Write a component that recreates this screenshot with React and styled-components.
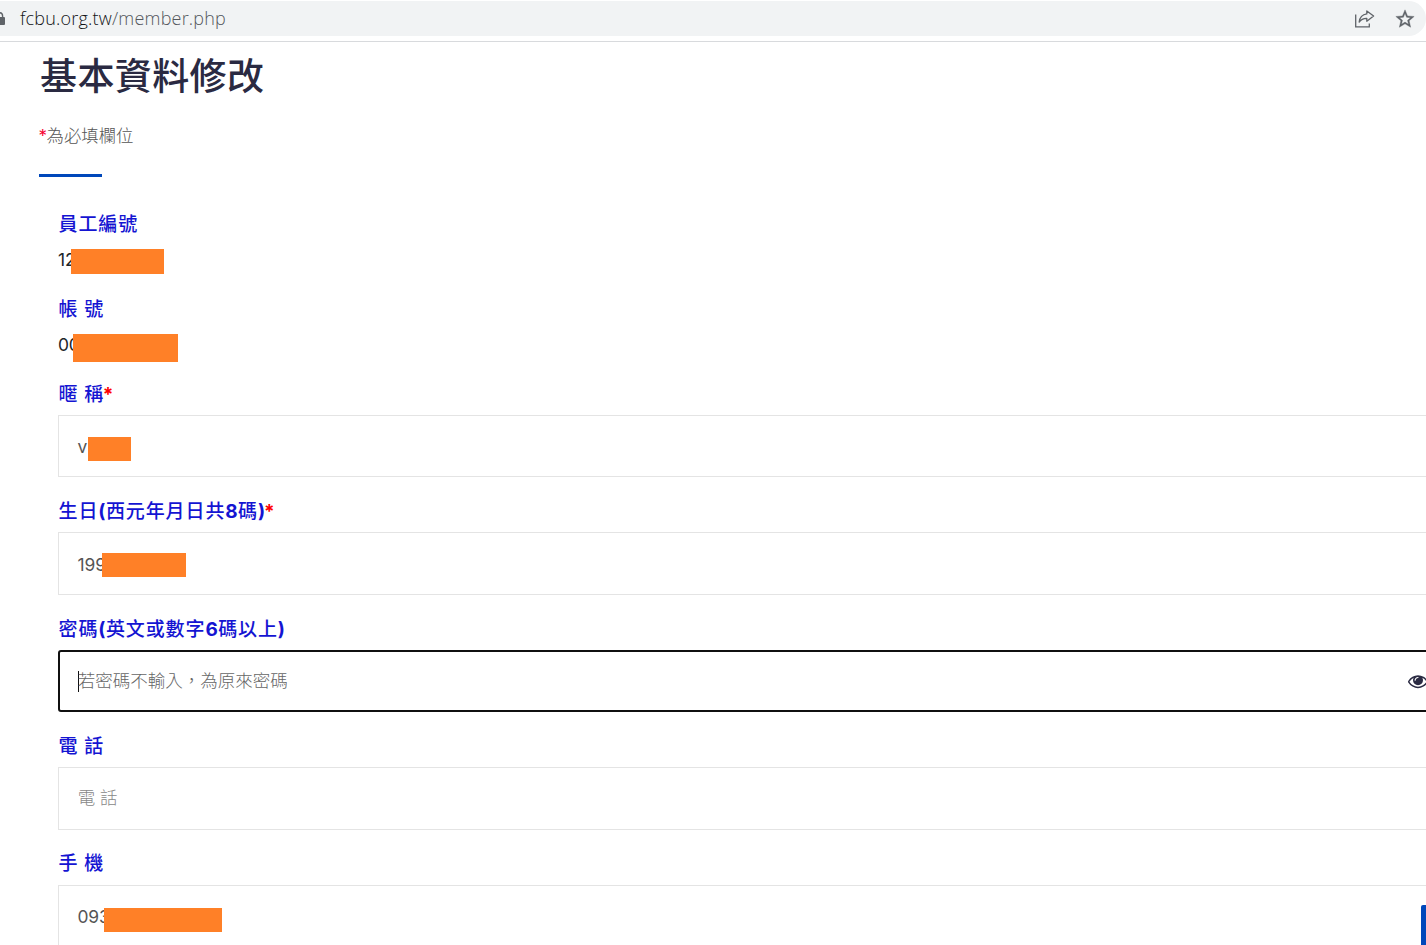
import React from 'react';
import styled, { createGlobalStyle } from 'styled-components';

const GlobalStyle = createGlobalStyle`
  * {
    box-sizing: border-box;
  }

  body {
    margin: 0;
    background: #fff;
    overflow: hidden;
  }
`;

// Fields shown on the member page
const fields = [
  { label: '員工編號', value: '12', plain: true, mask: { left: 13, top: 4, width: 93, height: 25 } },
  { label: '帳 號', value: '00', plain: true, mask: { left: 15, top: 4, width: 105, height: 28 } },
  { label: '暱 稱', required: true, value: 'v', mask: { left: 29, top: 21, width: 43, height: 24 } },
  { label: '生日(西元年月日共8碼)', required: true, value: '199', mask: { left: 43, top: 20, width: 84, height: 24 } },
  { label: '密碼(英文或數字6碼以上)', placeholder: '若密碼不輸入，為原來密碼', focused: true },
  { label: '電 話', placeholder: '電 話' },
  { label: '手 機', value: '093', mask: { left: 45, top: 22, width: 118, height: 24 } },
];

const LockIcon = () => (
  <svg width="5" height="14" viewBox="0 0 5 14">
    <path d="M-5 5H4Q5 5 5 6V12Q5 13 4 13H-5Z" fill="#5f6368" />
    <path d="M-4 5V4A3.2 3.2 0 0 1 2.6 4V5" fill="none" stroke="#5f6368" strokeWidth="1.4" />
  </svg>
);

const ShareIcon = () => (
  <svg width="20" height="20" viewBox="0 0 20 20" fill="none" stroke="#5f6368" strokeWidth="1.3">
    <path d="M0.7 5.5V17.8H14.3V14.5" />
    <path d="M11.8 1.9L18.6 7.1L11.8 12.2V9.3C8.4 9.2 6 10.4 4.2 13.1C4.7 8.7 7.4 5.5 11.8 4.9Z" strokeLinejoin="round" />
  </svg>
);

const StarIcon = () => (
  <svg width="22" height="22" viewBox="0 0 24 24" fill="#5f6368" stroke="#5f6368" strokeWidth="0.4">
    <path d="M22 9.24l-7.19-.62L12 2 9.19 8.63 2 9.24l5.46 4.73L5.82 21 12 17.27 18.18 21l-1.63-7.03L22 9.24zM12 15.4l-3.76 2.27 1-4.28-3.32-2.88 4.38-.38L12 6.1l1.71 4.04 4.38.38-3.32 2.88 1 4.28L12 15.4z" />
  </svg>
);

const EyeIcon = () => (
  <svg width="20" height="20" viewBox="0 0 1792 1792" fill="#2a2a42">
    <path d="M1664 960q-152-236-381-353 61 104 61 225 0 185-131.5 316.5t-316.5 131.5-316.5-131.5-131.5-316.5q0-121 61-225-229 117-381 353 133 205 333.5 326.5t434.5 121.5 434.5-121.5 333.5-326.5zm-720-384q0-20-14-34t-34-14q-125 0-214.5 89.5t-89.5 214.5q0 20 14 34t34 14 34-14 14-34q0-86 61-147t147-61q20 0 34-14t14-34zm848 384q0 34-20 69-140 230-376.5 368.5t-499.5 138.5-499.5-139-376.5-368q-20-35-20-69t20-69q140-229 376.5-368t499.5-139 499.5 139 376.5 368q20 35 20 69z" />
  </svg>
);

// Digits and brackets in a label are heavier than the Chinese text
const LabelText = ({ text }) =>
  text.split(/([()\d]+)/).map((part, index) =>
    /[()\d]/.test(part) ? <LatinPart key={index}>{part}</LatinPart> : part
  );

const App = () => {
  return (
    <Page>
      <GlobalStyle />
      <BrowserBar>
        <AddressBar>
          <LockIcon />
          <Url>
            fcbu.org.tw<UrlPath>/member.php</UrlPath>
          </Url>
          <BarIcons>
            <ShareIcon />
            <StarIcon />
          </BarIcons>
        </AddressBar>
      </BrowserBar>

      <Content>
        <Title>基本資料修改</Title>
        <Note>
          <NoteStar>*</NoteStar>為必填欄位
        </Note>
        <Divider />

        <Form>
          {fields.map((field) => (
            <Field key={field.label} $plain={field.plain}>
              <Label>
                <LabelText text={field.label} />
                {field.required && <Required>*</Required>}
              </Label>
              <Control $plain={field.plain} $focused={field.focused}>
                {field.focused && <Caret />}
                {field.value && <Value $plain={field.plain}>{field.value}</Value>}
                {field.placeholder && (
                  <Placeholder $focused={field.focused}>{field.placeholder}</Placeholder>
                )}
                {field.focused && (
                  <EyeButton>
                    <EyeIcon />
                  </EyeButton>
                )}
                {field.mask && <Mask $box={field.mask} />}
              </Control>
            </Field>
          ))}
        </Form>
      </Content>
      <ScrollTop />
    </Page>
  );
};

const Page = styled.div`
  position: relative;
  width: 1426px;
  height: 945px;
  overflow: hidden;
  background: #fff;
  font-family: 'Inter', 'Noto Sans CJK TC', sans-serif;
`;

const BrowserBar = styled.header`
  height: 42px;
  padding-top: 1px;
  border-bottom: 1px solid #d8dadd;
`;

const AddressBar = styled.div`
  display: flex;
  align-items: center;
  height: 35px;
  padding-right: 10.5px;
  background: #f1f3f4;
  border-radius: 0 18px 18px 0;
`;

const Url = styled.div`
  margin-left: 15px;
  padding-bottom: 2px;
  font-family: 'Open Sans', sans-serif;
  font-size: 18px;
  font-weight: 300;
  line-height: 24px;
  letter-spacing: 0.2px;
  color: #111316;
`;

const UrlPath = styled.span`
  color: #53575c;
`;

const BarIcons = styled.div`
  display: flex;
  align-items: center;
  gap: 18.5px;
  margin-left: auto;
`;

const Content = styled.main`
  padding-left: 39px;
`;

const Title = styled.h1`
  margin: 0;
  padding: 9px 0 0 1px;
  height: 78px;
  font-size: 37px;
  font-weight: 500;
  line-height: 52px;
  letter-spacing: 0.4px;
  color: #2a2a42;
`;

const Note = styled.p`
  margin: 0;
  height: 54px;
  font-size: 17.4px;
  font-weight: 300;
  line-height: 32px;
  color: #555;
`;

const NoteStar = styled.span`
  display: inline-block;
  width: 7.5px;
  font-size: 17px;
  font-weight: 400;
  letter-spacing: -1px;
  line-height: 20px;
  text-indent: -0.5px;
  color: #f5002f;
`;

const Divider = styled.div`
  width: 63px;
  height: 3px;
  background: #0047ba;
`;

const Form = styled.form`
  margin: 34px 0 0 19px;
`;

const Field = styled.div`
  height: ${({ $plain }) => ($plain ? '85px' : '117.4px')};
`;

const Label = styled.div`
  height: 34px;
  padding: 1.9px 0 0 0.5px;
  font-size: 19px;
  font-weight: 500;
  line-height: 24px;
  letter-spacing: 0.9px;
  white-space: pre;
  color: #1414d2;
`;

const LatinPart = styled.span`
  font-weight: 700;
  letter-spacing: 0.4px;
`;

const Required = styled.span`
  margin-left: -1.5px;
  font-weight: 700;
  color: #f00;
`;

const Control = styled.div`
  position: relative;
  display: flex;
  align-items: center;
  width: 1400px;
  height: ${({ $plain }) => ($plain ? '29px' : '62.4px')};
  padding-left: ${({ $plain, $focused }) => ($plain ? '0' : $focused ? '18px' : '19px')};
  border: ${({ $plain, $focused }) =>
    $plain ? 'none' : $focused ? '2px solid #101010' : '1px solid #e4e4e4'};
  border-radius: ${({ $focused }) => ($focused ? '3px' : '0')};
`;

const Value = styled.span`
  margin-left: ${({ $plain }) => ($plain ? '0' : '-0.5px')};
  padding-top: ${({ $plain }) => ($plain ? '0' : '2px')};
  font-size: 17.4px;
  line-height: 28px;
  letter-spacing: -0.1px;
  color: ${({ $plain }) => ($plain ? '#212529' : '#555')};
`;

const Placeholder = styled.span`
  margin-left: -0.3px;
  font-size: 17.5px;
  font-weight: 300;
  line-height: 28px;
  color: ${({ $focused }) => ($focused ? '#666' : '#888')};
`;

const Caret = styled.span`
  width: 1px;
  height: 21px;
  margin-top: 1px;
  margin-right: -1px;
  background: #111;
`;

const EyeButton = styled.span`
  position: absolute;
  left: 1348px;
  top: 19px;
  display: flex;
`;

// Covers private details
const Mask = styled.span`
  position: absolute;
  left: ${({ $box }) => $box.left}px;
  top: ${({ $box }) => $box.top}px;
  width: ${({ $box }) => $box.width}px;
  height: ${({ $box }) => $box.height}px;
  background: #ff8027;
`;

const ScrollTop = styled.div`
  position: absolute;
  right: 0;
  bottom: 0;
  width: 5px;
  height: 40px;
  background: #0047ba;
  border-radius: 2px 0 0 0;
`;

export default App;
